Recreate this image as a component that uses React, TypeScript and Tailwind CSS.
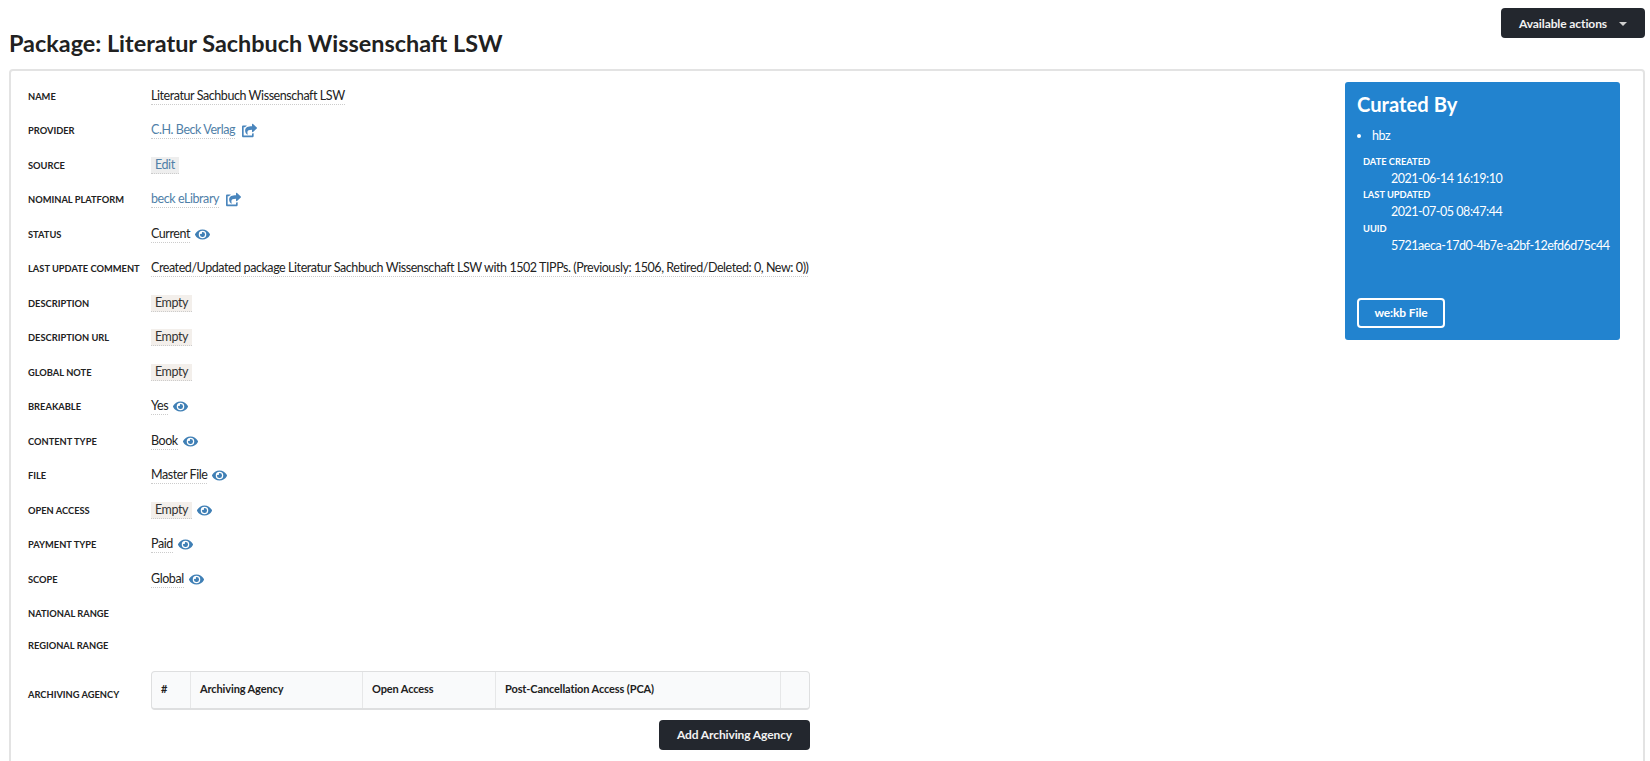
import { FaEye, FaShareSquare } from 'react-icons/fa'

const rows: { label: string; value?: string; kind?: 'text' | 'link' | 'edit' | 'empty'; eye?: boolean; share?: boolean; h?: string }[] = [
  { label: 'Name', value: 'Literatur Sachbuch Wissenschaft LSW' },
  { label: 'Provider', value: 'C.H. Beck Verlag', kind: 'link', share: true },
  { label: 'Source', value: 'Edit', kind: 'edit' },
  { label: 'Nominal Platform', value: 'beck eLibrary', kind: 'link', share: true },
  { label: 'Status', value: 'Current', eye: true },
  { label: 'Last Update Comment', value: 'Created/Updated package Literatur Sachbuch Wissenschaft LSW with 1502 TIPPs. (Previously: 1506, Retired/Deleted: 0, New: 0))' },
  { label: 'Description', value: 'Empty', kind: 'empty' },
  { label: 'Description URL', value: 'Empty', kind: 'empty' },
  { label: 'Global Note', value: 'Empty', kind: 'empty' },
  { label: 'Breakable', value: 'Yes', eye: true },
  { label: 'Content Type', value: 'Book', eye: true },
  { label: 'File', value: 'Master File', eye: true },
  { label: 'Open Access', value: 'Empty', kind: 'empty', eye: true },
  { label: 'Payment Type', value: 'Paid', eye: true },
  { label: 'Scope', value: 'Global', eye: true },
  { label: 'National Range', h: 'h-[33px]' },
  { label: 'Regional Range', h: 'h-[32px]' },
]

function Value({ row }: { row: (typeof rows)[number] }) {
  const dotted = 'border-b border-dotted border-[#cccccc] leading-[16px]'
  if (row.kind === 'link') return <span className={`${dotted} text-[#4f80a8]`}>{row.value}</span>
  if (row.kind === 'edit') return <span className={`${dotted} bg-[#eeeeee] px-1 text-[#4f80a8]`}>{row.value}</span>
  if (row.kind === 'empty') return <span className={`${dotted} bg-[#f3efeb] px-1 text-[#333333]`}>{row.value}</span>
  return <span className={`${dotted} text-[#222222]`}>{row.value}</span>
}

export default function App() {
  return (
    <div className="h-[761px] overflow-hidden bg-white font-['Lato',sans-serif] text-[12.5px] tracking-[-0.43px] text-[#212121]">
      <div className="flex justify-end pt-2 pr-[5px]">
        <button className="flex h-[30px] w-[144px] items-center justify-center gap-[12px] rounded-[4px] bg-[#23272e] pt-[1px] text-[12px] font-bold tracking-[-0.1px] text-[#f2f2f2]">
          Available actions
          <span className="mt-[1px] h-0 w-0 border-x-[4px] border-t-[4px] border-x-transparent border-t-[#d0d0d0]" />
        </button>
      </div>
      <h1 className="mt-[-14px] ml-[9px] h-[39px] text-[23.4px] leading-[39px] font-bold tracking-normal text-[#212121]">
        Package: Literatur Sachbuch Wissenschaft LSW
      </h1>
      <div className="mt-[6px] ml-[9px] h-[800px] w-[1636px] rounded-[4px] border-2 border-[#e3e3e3] pt-[8px] pr-[23px] pl-[17px]">
        <div className="flex justify-between">
          <div className="w-[782px]">
            {rows.map((row) => (
              <div key={row.label} className={`flex items-center ${row.h ?? 'h-[34.5px]'}`}>
                <div className="w-[123px] shrink-0 pt-[1px] text-[9.3px] font-bold tracking-normal text-[#222222] uppercase">{row.label}</div>
                <div className="flex items-center whitespace-nowrap">
                  {row.value && <Value row={row} />}
                  {row.share && <FaShareSquare className="ml-[7px] text-[15px] text-[#4a86bd]" />}
                  {row.eye && <FaEye className="ml-[5px] text-[15px] text-[#3f7fb5]" />}
                </div>
              </div>
            ))}
            <div className="mt-[9px] flex items-center">
              <div className="mt-[10px] w-[123px] shrink-0 text-[9.3px] font-bold tracking-normal text-[#222222] uppercase">Archiving Agency</div>
              <div className="flex h-[39px] w-[659px] rounded-[4px] border border-b-2 border-[#dedfe0] bg-[#f9fafb] text-[11px] font-bold tracking-[-0.12px]">
                <div className="flex w-[39px] items-center border-r border-[#e6e7e8] pl-[9px]">#</div>
                <div className="flex w-[172px] items-center border-r border-[#e6e7e8] pl-[9px]">Archiving Agency</div>
                <div className="flex w-[133px] items-center border-r border-[#e6e7e8] pl-[9px]">Open Access</div>
                <div className="flex w-[285px] items-center border-r border-[#e6e7e8] pl-[9px]">Post-Cancellation Access (PCA)</div>
              </div>
            </div>
            <div className="mt-[10px] flex justify-end">
              <button className="h-[30px] w-[151px] rounded-[4px] bg-[#23272e] text-[12px] font-bold tracking-[-0.12px] text-[#f2f2f2]">
                Add Archiving Agency
              </button>
            </div>
          </div>
          <div className="mt-[3px] flex h-[258px] w-[275px] flex-col rounded-[3px] bg-[#2283cf] px-3 pt-[11px] text-white">
            <div className="text-[20.2px] leading-[22px] font-bold tracking-normal">Curated By</div>
            <ul className="mt-[12px] list-disc pl-[15px] leading-[18px]">
              <li>hbz</li>
            </ul>
            <div className="mt-[9px] pl-[6px]">
              <div className="text-[9.3px] leading-[16px] font-bold tracking-normal uppercase">Date Created</div>
              <div className="pl-[28px] leading-[17px] tracking-[-0.47px]">2021-06-14 16:19:10</div>
              <div className="text-[9.3px] leading-[16px] font-bold tracking-normal uppercase">Last Updated</div>
              <div className="pl-[28px] leading-[18px] tracking-[-0.47px]">2021-07-05 08:47:44</div>
              <div className="text-[9.3px] leading-[16px] font-bold tracking-normal uppercase">UUID</div>
              <div className="pl-[28px] leading-[17px] tracking-[-0.47px] whitespace-nowrap">5721aeca-17d0-4b7e-a2bf-12efd6d75c44</div>
            </div>
            <button className="mt-[44px] h-[30px] w-[88px] rounded-[4px] border-2 border-white text-[12px] font-bold tracking-[-0.12px]">we:kb File</button>
          </div>
        </div>
      </div>
    </div>
  )
}
